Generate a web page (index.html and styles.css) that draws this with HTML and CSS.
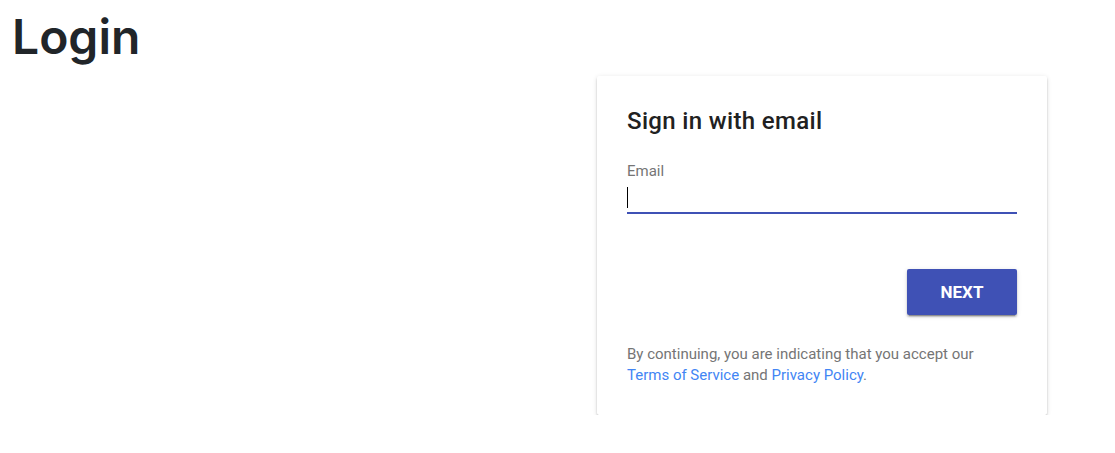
FILE: index.html
```html
<!DOCTYPE html>
<html lang="en">
<head>
<meta charset="utf-8">
<title>Login</title>
<link rel="stylesheet" href="styles.css">
</head>
<body>
<div class="page">
  <h1 class="page-title">Login</h1>
  <div class="auth-area">
    <div class="card">
      <h2 class="card-title">Sign in with email</h2>
      <div class="field">
        <label class="field-label">Email</label>
        <div class="field-input"><span class="caret"></span></div>
      </div>
      <div class="actions">
        <button class="btn-next" type="button">Next</button>
      </div>
      <p class="legal">By continuing, you are indicating that you accept our<br><a href="#" class="link">Terms of Service</a> and <a href="#" class="link">Privacy Policy</a>.</p>
    </div>
  </div>
</div>
</body>
</html>
```

FILE: styles.css
```css
html, body {
  margin: 0;
  padding: 0;
  background: #ffffff;
}
.page {
  padding: 8px 0 0 12px;
}
.page-title {
  margin: 0;
  font-family: "Segoe UI", Inter, sans-serif;
  font-weight: 600;
  font-size: 48px;
  line-height: 58px;
  color: #212529;
}
.auth-area {
  display: flex;
  padding-left: 585px;
  margin-top: 10px;
}
.card {
  width: 450px;
  box-sizing: border-box;
  padding: 30px 30px 29px;
  background: #fff;
  border-radius: 2px;
  box-shadow: 0 2px 2px 0 rgba(0,0,0,.2), 0 3px 1px -2px rgba(0,0,0,.25), 0 1px 5px 0 rgba(0,0,0,.12);
  font-family: Roboto, "Liberation Sans", sans-serif;
}
.card-title {
  margin: 0;
  font-size: 24px;
  font-weight: 500;
  letter-spacing: 0.35px;
  line-height: 30px;
  color: #212121;
}
.field {
  margin-top: 25px;
}
.field-label {
  display: block;
  font-size: 15px;
  line-height: 20px;
  color: #757575;
}
.field-input {
  height: 33px;
  box-sizing: border-box;
  border-bottom: 2px solid #3f51b5;
  padding-top: 6px;
}
.caret {
  display: block;
  width: 1px;
  height: 21px;
  background: #000;
}
.actions {
  display: flex;
  justify-content: flex-end;
  margin-top: 55px;
}
.btn-next {
  width: 110px;
  height: 46px;
  border: none;
  border-radius: 2px;
  background: #3f51b5;
  color: #fff;
  font-family: Roboto, "Liberation Sans", sans-serif;
  font-size: 17px;
  font-weight: 700;
  text-transform: uppercase;
  box-shadow: 0 2px 2px 0 rgba(0,0,0,.2), 0 3px 1px -2px rgba(0,0,0,.25), 0 1px 5px 0 rgba(0,0,0,.12);
  cursor: pointer;
}
.legal {
  margin: 29px 0 0;
  font-size: 15px;
  line-height: 21px;
  color: #757575;
}
.link {
  color: #4285f4;
  text-decoration: none;
}
```
